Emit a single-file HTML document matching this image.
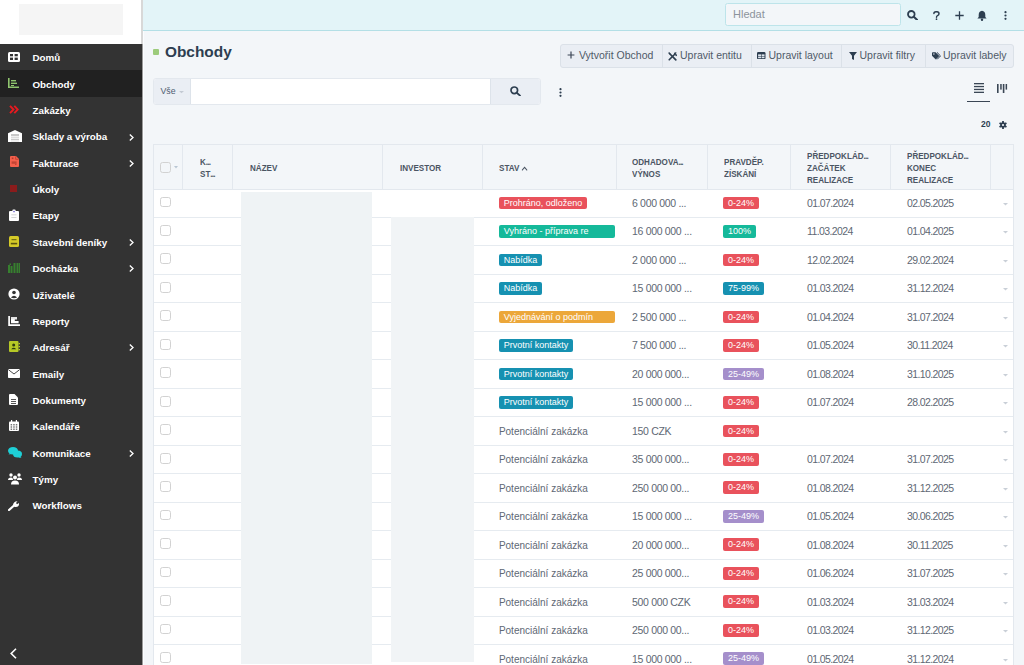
<!DOCTYPE html>
<html><head><meta charset="utf-8"><title>Obchody</title>
<style>
*{box-sizing:border-box;margin:0;padding:0}
html,body{width:1024px;height:665px;overflow:hidden}
body{position:relative;background:#f3f6f9;font-family:"Liberation Sans",sans-serif;color:#2d3e50}
.abs{position:absolute}
.side{position:absolute;left:0;top:0;width:142px;height:665px;background:#333333}
.logoarea{position:absolute;left:0;top:0;width:142px;height:44px;background:#fff}
.logo{position:absolute;left:19px;top:4px;width:104px;height:31px;background:#f5f5f5}
.sbord{position:absolute;left:142px;top:44px;width:1px;height:621px;background:#9a9a9a}.sbord2{position:absolute;left:141px;top:0;width:2px;height:44px;background:#d8d8d8}.wline{position:absolute;left:143px;top:31px;width:1px;height:634px;background:#fbfdff}
.nav{position:absolute;left:0;width:142px;height:26.35px}
.nav.act{background:#212121}
.nav .ic{position:absolute;line-height:0}
.nav .tx{position:absolute;left:32.5px;top:1.4px;height:26.35px;line-height:26.35px;font-size:9.8px;font-weight:bold;color:#fff;white-space:nowrap}
.nav .chev{position:absolute;left:129px}
.hdr{position:absolute;left:143px;top:0;width:881px;height:31px;background:#e3f4f8;border-bottom:1px solid #b3dfe6}
.search{position:absolute;left:725px;top:3px;width:176px;height:22.5px;background:#f3f6f9;border:1.4px solid #bde4ea;border-radius:2.5px}
.search span{position:absolute;left:7px;top:0;line-height:20.5px;font-size:11px;color:#8c939c}
.btngrp{position:absolute;left:559.5px;top:44px;width:454px;height:23.5px;background:#eaeef4;border:1px solid #dbe1e8;border-radius:3px}
.btn{position:absolute;top:0;height:21.5px;line-height:21.5px;font-size:10.5px;color:#4f5a68;white-space:nowrap}
.dv{position:absolute;top:0;width:1px;height:21.5px;background:#dbe1e8}
.tbl{position:absolute;left:152.5px;top:143.5px;width:861px;height:540px;background:#fff;border:1px solid #e3e8ee}
.th{position:absolute;left:0;top:0;width:859px;height:45px;background:#f3f6f9;border-bottom:1px solid #e3e8ee}
.thd{position:absolute;top:0;width:1px;height:44px;background:#e3e8ee}
.htx{position:absolute;font-size:8.7px;font-weight:bold;color:#4b5563;letter-spacing:0px;line-height:12.4px;white-space:nowrap;transform:scaleX(0.93);transform-origin:0 50%}.htx i{font-style:normal;letter-spacing:-0.9px}
.row{position:absolute;left:0;width:859px;height:28.47px;border-bottom:1px solid #e6ebf0}
.cb{position:absolute;left:6.8px;width:10.8px;height:10.8px;border:1.7px solid #d2d2d2;border-radius:2.6px}
.cell{position:absolute;top:0.5px;height:27.47px;line-height:27.47px;white-space:nowrap;color:#606874}
.badge{position:absolute;height:12.7px;line-height:12.7px;font-size:9px;color:#fff;border-radius:2px;padding:0 5px;white-space:nowrap;overflow:hidden}
.chv{position:absolute;left:849px;width:5px;height:3px;line-height:0}
.redact{position:absolute;background:#eff3f5}
</style></head><body>
<div class="side"></div><div class="logoarea"><div class="logo"></div></div><div class="sbord"></div><div class="sbord2"></div><div class="wline"></div><div class="nav" style="top:44.00px"><div class="ic" style="left:8px;top:8.00px"><svg width="12" height="10" viewBox="0 0 12 10"><rect x="0" y="0" width="12" height="10" rx="1.5" fill="#fff"/><rect x="2" y="2" width="3" height="2.3" fill="#333"/><rect x="6.6" y="2" width="3.2" height="2.3" fill="#333"/><rect x="2" y="5.6" width="3" height="2.4" fill="#333"/><rect x="6.6" y="5.6" width="3.2" height="2.4" fill="#333"/></svg></div><div class="tx">Domů</div></div><div class="nav act" style="top:70.35px"><div class="ic" style="left:8px;top:7.65px"><svg width="11" height="10" viewBox="0 0 11 10"><path d="M0.8 0 V9.2 H11" stroke="#8fc46e" stroke-width="1.6" fill="none"/><rect x="3" y="2" width="5" height="1.4" fill="#8fc46e"/><rect x="3" y="4.6" width="6" height="1.4" fill="#8fc46e"/><rect x="3" y="7" width="3" height="1" fill="#8fc46e"/></svg></div><div class="tx">Obchody</div></div><div class="nav" style="top:96.70px"><div class="ic" style="left:9px;top:8.30px"><svg width="10" height="9" viewBox="0 0 10 9"><path d="M1 0.8 L4.5 4.5 L1 8.2 M5.3 0.8 L8.8 4.5 L5.3 8.2" stroke="#e8191f" stroke-width="1.9" fill="none"/></svg></div><div class="tx">Zakázky</div></div><div class="nav" style="top:123.05px"><div class="ic" style="left:8px;top:6.95px"><svg width="14" height="12" viewBox="0 0 14 12"><path d="M0 3.2 L7 0 L14 3.2 V12 H0 Z" fill="#fff"/><rect x="3" y="4.2" width="8" height="7.8" fill="#f0f0f0"/><rect x="3" y="4.2" width="8" height="1.6" fill="#bdbdbd"/><rect x="3" y="7" width="8" height="0.6" fill="#cfcfcf"/><rect x="3" y="9" width="8" height="0.9" fill="#c4c4c4"/></svg></div><div class="tx">Sklady a výroba</div><div class="chev" style="top:3.65px;"><svg width="5" height="7" viewBox="0 0 5 7"><path d="M0.8 0.6 L4 3.5 L0.8 6.4" stroke="#fff" stroke-width="1.3" fill="none"/></svg></div></div><div class="nav" style="top:149.40px"><div class="ic" style="left:9.5px;top:7.10px"><svg width="9" height="11" viewBox="0 0 9 11"><path d="M0 1 Q0 0 1 0 H6 L9 3 V10 Q9 11 8 11 H1 Q0 11 0 10 Z" fill="#f4604c"/><path d="M5.6 0.3 V3.3 H8.7" stroke="#b83a2c" stroke-width="0.7" fill="none"/><rect x="1.8" y="1.5" width="1.6" height="1.6" fill="#b83a2c"/><rect x="1.6" y="5.4" width="5" height="2.4" fill="#c24434"/><rect x="5" y="7.8" width="1.5" height="1.2" fill="#c24434"/></svg></div><div class="tx">Fakturace</div><div class="chev" style="top:3.65px;"><svg width="5" height="7" viewBox="0 0 5 7"><path d="M0.8 0.6 L4 3.5 L0.8 6.4" stroke="#fff" stroke-width="1.3" fill="none"/></svg></div></div><div class="nav" style="top:175.75px"><div class="ic" style="left:9.5px;top:9.25px"><svg width="7" height="7" viewBox="0 0 7 7"><rect width="7" height="7" fill="#8a1c1c"/></svg></div><div class="tx">Úkoly</div></div><div class="nav" style="top:202.10px"><div class="ic" style="left:8.5px;top:6.70px"><svg width="10" height="12" viewBox="0 0 10 12"><rect x="0" y="2" width="10" height="10" rx="1" fill="#fff"/><path d="M3 2.5 L3.8 0.5 H6.2 L7 2.5 Z" fill="#fff"/><circle cx="5" cy="2.6" r="0.8" fill="#6a5acd"/><rect x="2.3" y="5.4" width="5.2" height="0.9" fill="#d0d0d0"/><rect x="2.3" y="8" width="5.2" height="0.9" fill="#d0d0d0"/></svg></div><div class="tx">Etapy</div></div><div class="nav" style="top:228.45px"><div class="ic" style="left:8.7px;top:7.55px"><svg width="10" height="11" viewBox="0 0 10 11"><rect width="10" height="11" rx="1.5" fill="#d5ca28"/><rect x="2.5" y="3.2" width="5" height="1" fill="#5a5410"/><rect x="1.8" y="6.8" width="6.4" height="1.6" fill="#5a5410"/></svg></div><div class="tx">Stavební deníky</div><div class="chev" style="top:3.65px;"><svg width="5" height="7" viewBox="0 0 5 7"><path d="M0.8 0.6 L4 3.5 L0.8 6.4" stroke="#fff" stroke-width="1.3" fill="none"/></svg></div></div><div class="nav" style="top:254.80px"><div class="ic" style="left:8px;top:8.20px"><svg width="12" height="10" viewBox="0 0 12 10"><rect x="0" y="2" width="2" height="8" fill="#37802f"/><rect x="2.5" y="3" width="2" height="7" fill="#37802f"/><rect x="5.5" y="0" width="2" height="10" fill="#37802f"/><rect x="8.5" y="0" width="1.5" height="10" fill="#37802f"/><rect x="10.5" y="0" width="1.5" height="10" fill="#37802f"/><rect x="1.5" y="0.5" width="1.5" height="1.5" fill="#37802f"/></svg></div><div class="tx">Docházka</div><div class="chev" style="top:3.65px;"><svg width="5" height="7" viewBox="0 0 5 7"><path d="M0.8 0.6 L4 3.5 L0.8 6.4" stroke="#fff" stroke-width="1.3" fill="none"/></svg></div></div><div class="nav" style="top:281.15px"><div class="ic" style="left:7.8px;top:7.05px"><svg width="12" height="12" viewBox="0 0 12 12"><circle cx="6" cy="6" r="5.6" fill="#fff"/><circle cx="6" cy="4.5" r="1.8" fill="#333"/><path d="M2.9 9.4 Q6 6.3 9.1 9.4 Q6 11 2.9 9.4 Z" fill="#333"/></svg></div><div class="tx">Uživatelé</div></div><div class="nav" style="top:307.50px"><div class="ic" style="left:7.8px;top:8.30px"><svg width="12" height="10" viewBox="0 0 12 10"><path d="M1.1 0 V9.1 H12" stroke="#fff" stroke-width="1.7" fill="none"/><path d="M3 1.2 H9 V3.3 H6.8 V5 H10.6 V7.3 H3 Z" fill="#fff"/><rect x="3" y="1.2" width="6" height="2.1" fill="#e6e6e6"/></svg></div><div class="tx">Reporty</div></div><div class="nav" style="top:333.85px"><div class="ic" style="left:8.7px;top:7.55px"><svg width="11" height="11" viewBox="0 0 11 11"><rect width="9.5" height="11" rx="1" fill="#b6c826"/><circle cx="4.7" cy="4" r="1.5" fill="#2d3a10"/><path d="M2.2 8.2 Q4.7 5.4 7.2 8.2 Z" fill="#2d3a10"/><rect x="9.6" y="2" width="1.4" height="1.3" fill="#b6c826"/><rect x="9.6" y="5" width="1.4" height="1.3" fill="#b6c826"/><rect x="9.6" y="8" width="1.4" height="1.3" fill="#b6c826"/></svg></div><div class="tx">Adresář</div><div class="chev" style="top:3.65px;"><svg width="5" height="7" viewBox="0 0 5 7"><path d="M0.8 0.6 L4 3.5 L0.8 6.4" stroke="#fff" stroke-width="1.3" fill="none"/></svg></div></div><div class="nav" style="top:360.20px"><div class="ic" style="left:7.8px;top:8.80px"><svg width="12" height="9" viewBox="0 0 12 9"><rect width="12" height="9" rx="0.8" fill="#fff"/><path d="M0.3 0.6 L6 5 L11.7 0.6" stroke="#333" stroke-width="0.9" fill="none"/></svg></div><div class="tx">Emaily</div></div><div class="nav" style="top:386.55px"><div class="ic" style="left:9px;top:7.95px"><svg width="9" height="11" viewBox="0 0 9 11"><path d="M0 1 Q0 0 1 0 H5.5 L9 3.5 V10 Q9 11 8 11 H1 Q0 11 0 10 Z" fill="#fff"/><rect x="2" y="5" width="5" height="0.9" fill="#444"/><rect x="2" y="7" width="5" height="0.9" fill="#444"/><rect x="2" y="9" width="5" height="0.9" fill="#444"/></svg></div><div class="tx">Dokumenty</div></div><div class="nav" style="top:412.90px"><div class="ic" style="left:8.7px;top:7.60px"><svg width="10" height="11" viewBox="0 0 10 11"><rect x="0" y="1.5" width="10" height="9.5" rx="1" fill="#fff"/><rect x="2" y="0" width="1.2" height="2.5" fill="#fff"/><rect x="6.8" y="0" width="1.2" height="2.5" fill="#fff"/><g fill="#555"><rect x="1.6" y="4.2" width="1.5" height="1.2"/><rect x="4.2" y="4.2" width="1.5" height="1.2"/><rect x="6.8" y="4.2" width="1.5" height="1.2"/><rect x="1.6" y="6.4" width="1.5" height="1.2"/><rect x="4.2" y="6.4" width="1.5" height="1.2"/><rect x="6.8" y="6.4" width="1.5" height="1.2"/><rect x="1.6" y="8.6" width="1.5" height="1.2"/><rect x="4.2" y="8.6" width="1.5" height="1.2"/><rect x="6.8" y="8.6" width="1.5" height="1.2"/></g></svg></div><div class="tx">Kalendáře</div></div><div class="nav" style="top:439.25px"><div class="ic" style="left:7.8px;top:7.95px"><svg width="14" height="11" viewBox="0 0 14 11"><ellipse cx="5" cy="3.8" rx="5" ry="3.8" fill="#1ecfd6"/><path d="M0.5 7.5 L2.5 5.5 L3.5 7 Z" fill="#1ecfd6"/><ellipse cx="9.5" cy="7" rx="4.5" ry="3.6" fill="#1ecfd6"/><path d="M13.5 11 L11.5 9 L10.5 10.4 Z" fill="#1ecfd6"/></svg></div><div class="tx">Komunikace</div><div class="chev" style="top:3.65px;"><svg width="5" height="7" viewBox="0 0 5 7"><path d="M0.8 0.6 L4 3.5 L0.8 6.4" stroke="#fff" stroke-width="1.3" fill="none"/></svg></div></div><div class="nav" style="top:465.60px"><div class="ic" style="left:7.8px;top:7.40px"><svg width="14" height="12" viewBox="0 0 14 12"><circle cx="3" cy="2" r="1.7" fill="#fff"/><circle cx="11" cy="2" r="1.7" fill="#fff"/><circle cx="7" cy="4.6" r="2" fill="#fff"/><path d="M0 7 Q0 4.5 3 4.5 Q5 4.5 5 6.5 V7 Z" fill="#fff"/><path d="M14 7 Q14 4.5 11 4.5 Q9 4.5 9 6.5 V7 Z" fill="#fff"/><path d="M3 11.5 Q3 7.5 7 7.5 Q11 7.5 11 11.5 Z" fill="#fff"/></svg></div><div class="tx">Týmy</div></div><div class="nav" style="top:491.95px"><div class="ic" style="left:7.8px;top:9.25px"><svg width="12" height="10" viewBox="0 0 12 10"><path d="M1 9 L6 4.5" stroke="#fff" stroke-width="2.2" stroke-linecap="round"/><path d="M5 4.5 Q5 0.5 9.5 0.3 L8 2 L9 3.2 L11 2 Q11.5 6.5 6.8 6 Z" fill="#fff"/></svg></div><div class="tx">Workflows</div></div><div class="abs" style="left:9.5px;top:647.5px;line-height:0"><svg width="7" height="11" viewBox="0 0 7 11"><path d="M6 0.8 L1.2 5.5 L6 10.2" stroke="#fff" stroke-width="1.6" fill="none"/></svg></div><div class="hdr"></div><div class="search"><span>Hledat</span></div><div class="abs" style="left:907px;top:10px;line-height:0"><svg width="12" height="10" viewBox="0 0 12 10"><circle cx="4.3" cy="4.3" r="3.3" stroke="#2d3e50" stroke-width="1.8" fill="none"/><path d="M6.8 6.8 L10 9.8" stroke="#2d3e50" stroke-width="2" stroke-linecap="round"/></svg></div><div class="abs" style="left:933px;top:11px;line-height:0"><svg width="7" height="9" viewBox="0 0 7 9"><path d="M0.9 2.6 Q0.9 0.7 3.4 0.7 Q6 0.7 6 2.7 Q6 4 4.5 4.7 Q3.5 5.2 3.5 6.2" stroke="#2d3e50" stroke-width="1.45" fill="none" stroke-linecap="round"/><circle cx="3.5" cy="8.2" r="0.85" fill="#2d3e50"/></svg></div><div class="abs" style="left:954.5px;top:10.8px;line-height:0"><svg width="9" height="9" viewBox="0 0 9 9"><path d="M4.5 0.3 V8.7 M0.3 4.5 H8.7" stroke="#2d3e50" stroke-width="1.3"/></svg></div><div class="abs" style="left:977px;top:9.5px;line-height:0"><svg width="10" height="11" viewBox="0 0 10 11"><path d="M5 0.8 Q8.3 1.2 8.3 5 V7 L9.6 8.6 H0.4 L1.7 7 V5 Q1.7 1.2 5 0.8 Z" fill="#2d3e50"/><circle cx="5" cy="9.7" r="1.2" fill="#2d3e50"/></svg></div><div class="abs" style="left:1004px;top:11px;line-height:0"><svg width="3" height="9" viewBox="0 0 3 9"><circle cx="1.5" cy="1.2" r="1.1" fill="#2d3e50"/><circle cx="1.5" cy="4.5" r="1.1" fill="#2d3e50"/><circle cx="1.5" cy="7.8" r="1.1" fill="#2d3e50"/></svg></div><div class="abs" style="left:152.5px;top:48.7px;width:6.3px;height:6.3px;background:#9ccb7b;border-radius:1px"></div><div class="abs" style="left:165px;top:42px;font-size:15.4px;font-weight:bold;color:#2d3e50;line-height:20px">Obchody</div><div class="btngrp"><div class="abs" style="left:6px;top:6px;line-height:0"><svg width="8" height="8" viewBox="0 0 8 8"><path d="M4 0.6 V7.4 M0.6 4 H7.4" stroke="#3d4756" stroke-width="1.2"/></svg></div><div class="btn" style="left:18.5px">Vytvořit Obchod</div><div class="dv" style="left:101.5px"></div><div class="abs" style="left:107.5px;top:6.6px;line-height:0"><svg width="9" height="9" viewBox="0 0 9 9"><path d="M1.2 7.8 L7 2" stroke="#2d3e50" stroke-width="1.6" stroke-linecap="round"/><path d="M5.8 1.2 Q7.2 -0.3 8.8 0.8 L7.5 2 L8.2 2.8 L9 1.8 Q9.6 3.6 8 4.2 Z" fill="#2d3e50"/><path d="M1.5 1.5 L7.8 7.8" stroke="#2d3e50" stroke-width="1.7" stroke-linecap="round"/><path d="M0.2 0.8 L1.2 0.2 L2.6 1.6 L1.6 2.6 Z" fill="#2d3e50"/></svg></div><div class="btn" style="left:119.5px">Upravit entitu</div><div class="dv" style="left:190px"></div><div class="abs" style="left:196.5px;top:7.3px;line-height:0"><svg width="8.5" height="7.2" viewBox="0 0 8.5 7.2"><rect width="8.5" height="7.2" rx="1.3" fill="#2d3e50"/><g fill="#dfe6ee"><rect x="1.1" y="2.4" width="2.9" height="1.7"/><rect x="4.6" y="2.4" width="2.9" height="1.7"/><rect x="1.1" y="4.6" width="2.9" height="1.6"/><rect x="4.6" y="4.6" width="2.9" height="1.6"/></g></svg></div><div class="btn" style="left:208px">Upravit layout</div><div class="dv" style="left:280.5px"></div><div class="abs" style="left:288px;top:7px;line-height:0"><svg width="8" height="8" viewBox="0 0 8 8"><path d="M0 0 H8 L5 3.8 V8 L3 7 V3.8 Z" fill="#2d3e50"/></svg></div><div class="btn" style="left:299px">Upravit filtry</div><div class="dv" style="left:364px"></div><div class="abs" style="left:371px;top:7px;line-height:0"><svg width="9" height="8" viewBox="0 0 9 8"><path d="M0 0.9 Q0 0.2 0.8 0.2 H3.6 L7.3 3.9 L3.8 7.5 L0 3.7 Z" fill="#2d3e50"/><path d="M4.9 0.3 L8.5 3.9 L5.2 7.3" stroke="#2d3e50" stroke-width="1" fill="none"/><circle cx="1.9" cy="2" r="0.75" fill="#e4e9f0"/></svg></div><div class="btn" style="left:382.5px">Upravit labely</div></div><div class="abs" style="left:152.5px;top:78px;width:388.5px;height:27px;background:#fff;border:1px solid #e3e8ee;border-radius:3px;overflow:hidden"><div class="abs" style="left:0;top:0;width:37.5px;height:25px;background:#eaeef4;border-right:1px solid #dde3ea"></div><div class="abs" style="left:7px;top:0;line-height:25px;font-size:8.8px;color:#4f5d70">Vše</div><div class="abs" style="left:25px;top:10px;line-height:0"><svg width="5" height="3" viewBox="0 0 5 3"><path d="M0 0 H5 L2.5 2.2 Z" fill="#c3cad3"/></svg></div><div class="abs" style="left:336.5px;top:0;width:51px;height:25px;background:#eaeef4;border-left:1px solid #dde3ea"></div></div><div class="abs" style="left:509.5px;top:86.2px;line-height:0"><svg width="12" height="10" viewBox="0 0 12 10"><circle cx="4.3" cy="4.3" r="3.3" stroke="#2d3e50" stroke-width="1.7" fill="none"/><path d="M6.8 6.8 L10 9.6" stroke="#2d3e50" stroke-width="1.8" stroke-linecap="round"/></svg></div><div class="abs" style="left:558.5px;top:87.5px;line-height:0"><svg width="3" height="9" viewBox="0 0 3 9"><circle cx="1.5" cy="1.2" r="1.1" fill="#2d3e50"/><circle cx="1.5" cy="4.5" r="1.1" fill="#2d3e50"/><circle cx="1.5" cy="7.8" r="1.1" fill="#2d3e50"/></svg></div><div class="abs" style="left:973.5px;top:83px;line-height:0"><svg width="10" height="10" viewBox="0 0 10 10"><g fill="#3a4655"><rect y="0" width="10" height="1.3"/><rect y="2.9" width="10" height="1.3"/><rect y="5.8" width="10" height="1.3"/><rect y="8.7" width="10" height="1.3"/></g></svg></div><div class="abs" style="left:966.5px;top:100.5px;width:23.5px;height:1.5px;background:#3a4655"></div><div class="abs" style="left:996.5px;top:84px;line-height:0"><svg width="11" height="9" viewBox="0 0 11 9"><g fill="#3a4655"><rect x="0" y="0" width="1.6" height="9"/><rect x="3.2" y="0" width="1.5" height="5.6"/><rect x="5.8" y="0" width="1.6" height="9"/><rect x="8.6" y="0" width="1.5" height="5.6"/></g></svg></div><div class="abs" style="left:981px;top:118px;font-size:8.5px;font-weight:bold;color:#2d3e50;line-height:12px">20</div><div class="abs" style="left:998.5px;top:121px;line-height:0"><svg width="8" height="8" viewBox="0 0 8 8"><g fill="#2d3e50"><circle cx="4" cy="4" r="2.8"/><rect x="3.1" y="0" width="1.8" height="8"/><rect x="3.1" y="0" width="1.8" height="8" transform="rotate(60 4 4)"/><rect x="3.1" y="0" width="1.8" height="8" transform="rotate(120 4 4)"/></g><circle cx="4" cy="4" r="1.1" fill="#f3f6f9"/></svg></div><div class="tbl"><div class="th"><div class="thd" style="left:28.8px"></div><div class="thd" style="left:78.9px"></div><div class="thd" style="left:228.8px"></div><div class="thd" style="left:328.5px"></div><div class="thd" style="left:462.3px"></div><div class="thd" style="left:553.0px"></div><div class="thd" style="left:636.7px"></div><div class="thd" style="left:736.5px"></div><div class="thd" style="left:836.5px"></div><div class="cb" style="top:17.3px"></div><div class="abs" style="left:20.5px;top:19.8px;line-height:0"><svg width="4" height="3" viewBox="0 0 4 3"><path d="M0 0 H4 L2 2.4 Z" fill="#b9c6d3"/></svg></div><div class="htx" style="left:46.2px;top:11.3px">K<i>...</i><br>ST<i>...</i></div><div class="htx" style="left:96.3px;top:17.5px">NÁZEV</div><div class="htx" style="left:246.0px;top:17.5px">INVESTOR</div><div class="htx" style="left:345.5px;top:17.6px">STAV <svg width="7" height="5" viewBox="0 0 7 5" style="vertical-align:0.5px"><path d="M0.7 4.3 L3.5 1.3 L6.3 4.3" stroke="#4b5563" stroke-width="1.05" fill="none"/></svg></div><div class="htx" style="left:478.8px;top:11.3px">ODHADOVA<i>...</i><br>VÝNOS</div><div class="htx" style="left:570.2px;top:11.3px">PRAVDĚP.<br>ZÍSKÁNÍ</div><div class="htx" style="left:653.5px;top:5.1px">PŘEDPOKLÁD<i>...</i><br>ZAČÁTEK<br>REALIZACE</div><div class="htx" style="left:753.5px;top:5.1px">PŘEDPOKLÁD<i>...</i><br>KONEC<br>REALIZACE</div></div><div class="row" style="top:45.00px"><div class="cb" style="top:7px"></div><div class="badge" style="left:345.3px;top:7.3px;background:#e9525c;max-width:116px;">Prohráno, odloženo</div><div class="cell" style="left:478.5px;font-size:10.5px;letter-spacing:-0.32px">6 000 000 ...</div><div class="badge" style="left:569.5px;top:7.3px;background:#e9525c">0-24%</div><div class="cell" style="left:653.5px;font-size:10.5px;letter-spacing:-0.6px">01.07.2024</div><div class="cell" style="left:753.5px;font-size:10.5px;letter-spacing:-0.6px">02.05.2025</div><div class="chv" style="top:11.5px"><svg width="5" height="3" viewBox="0 0 5 3"><path d="M0 0 H5 L2.5 2.5 Z" fill="#c9cfd7"/></svg></div></div><div class="row" style="top:73.47px"><div class="cb" style="top:7px"></div><div class="badge" style="left:345.3px;top:7.3px;background:#15b99a;max-width:116px;width:116px">Vyhráno - příprava re</div><div class="cell" style="left:478.5px;font-size:10.5px;letter-spacing:-0.32px">16 000 000 ...</div><div class="badge" style="left:569.5px;top:7.3px;background:#15b99a">100%</div><div class="cell" style="left:653.5px;font-size:10.5px;letter-spacing:-0.6px">11.03.2024</div><div class="cell" style="left:753.5px;font-size:10.5px;letter-spacing:-0.6px">01.04.2025</div><div class="chv" style="top:11.5px"><svg width="5" height="3" viewBox="0 0 5 3"><path d="M0 0 H5 L2.5 2.5 Z" fill="#c9cfd7"/></svg></div></div><div class="row" style="top:101.94px"><div class="cb" style="top:7px"></div><div class="badge" style="left:345.3px;top:7.3px;background:#1691b1;max-width:116px;">Nabídka</div><div class="cell" style="left:478.5px;font-size:10.5px;letter-spacing:-0.32px">2 000 000 ...</div><div class="badge" style="left:569.5px;top:7.3px;background:#e9525c">0-24%</div><div class="cell" style="left:653.5px;font-size:10.5px;letter-spacing:-0.6px">12.02.2024</div><div class="cell" style="left:753.5px;font-size:10.5px;letter-spacing:-0.6px">29.02.2024</div><div class="chv" style="top:11.5px"><svg width="5" height="3" viewBox="0 0 5 3"><path d="M0 0 H5 L2.5 2.5 Z" fill="#c9cfd7"/></svg></div></div><div class="row" style="top:130.41px"><div class="cb" style="top:7px"></div><div class="badge" style="left:345.3px;top:7.3px;background:#1691b1;max-width:116px;">Nabídka</div><div class="cell" style="left:478.5px;font-size:10.5px;letter-spacing:-0.32px">15 000 000 ...</div><div class="badge" style="left:569.5px;top:7.3px;background:#1691b1">75-99%</div><div class="cell" style="left:653.5px;font-size:10.5px;letter-spacing:-0.6px">01.03.2024</div><div class="cell" style="left:753.5px;font-size:10.5px;letter-spacing:-0.6px">31.12.2024</div><div class="chv" style="top:11.5px"><svg width="5" height="3" viewBox="0 0 5 3"><path d="M0 0 H5 L2.5 2.5 Z" fill="#c9cfd7"/></svg></div></div><div class="row" style="top:158.88px"><div class="cb" style="top:7px"></div><div class="badge" style="left:345.3px;top:7.3px;background:#eca73a;max-width:116px;width:116px">Vyjednávání o podmín</div><div class="cell" style="left:478.5px;font-size:10.5px;letter-spacing:-0.32px">2 500 000 ...</div><div class="badge" style="left:569.5px;top:7.3px;background:#e9525c">0-24%</div><div class="cell" style="left:653.5px;font-size:10.5px;letter-spacing:-0.6px">01.04.2024</div><div class="cell" style="left:753.5px;font-size:10.5px;letter-spacing:-0.6px">31.07.2024</div><div class="chv" style="top:11.5px"><svg width="5" height="3" viewBox="0 0 5 3"><path d="M0 0 H5 L2.5 2.5 Z" fill="#c9cfd7"/></svg></div></div><div class="row" style="top:187.35px"><div class="cb" style="top:7px"></div><div class="badge" style="left:345.3px;top:7.3px;background:#1691b1;max-width:116px;">Prvotní kontakty</div><div class="cell" style="left:478.5px;font-size:10.5px;letter-spacing:-0.32px">7 500 000 ...</div><div class="badge" style="left:569.5px;top:7.3px;background:#e9525c">0-24%</div><div class="cell" style="left:653.5px;font-size:10.5px;letter-spacing:-0.6px">01.05.2024</div><div class="cell" style="left:753.5px;font-size:10.5px;letter-spacing:-0.6px">30.11.2024</div><div class="chv" style="top:11.5px"><svg width="5" height="3" viewBox="0 0 5 3"><path d="M0 0 H5 L2.5 2.5 Z" fill="#c9cfd7"/></svg></div></div><div class="row" style="top:215.82px"><div class="cb" style="top:7px"></div><div class="badge" style="left:345.3px;top:7.3px;background:#1691b1;max-width:116px;">Prvotní kontakty</div><div class="cell" style="left:478.5px;font-size:10.5px;letter-spacing:-0.32px">20 000 000...</div><div class="badge" style="left:569.5px;top:7.3px;background:#a58fcb">25-49%</div><div class="cell" style="left:653.5px;font-size:10.5px;letter-spacing:-0.6px">01.08.2024</div><div class="cell" style="left:753.5px;font-size:10.5px;letter-spacing:-0.6px">31.10.2025</div><div class="chv" style="top:11.5px"><svg width="5" height="3" viewBox="0 0 5 3"><path d="M0 0 H5 L2.5 2.5 Z" fill="#c9cfd7"/></svg></div></div><div class="row" style="top:244.29px"><div class="cb" style="top:7px"></div><div class="badge" style="left:345.3px;top:7.3px;background:#1691b1;max-width:116px;">Prvotní kontakty</div><div class="cell" style="left:478.5px;font-size:10.5px;letter-spacing:-0.32px">15 000 000 ...</div><div class="badge" style="left:569.5px;top:7.3px;background:#e9525c">0-24%</div><div class="cell" style="left:653.5px;font-size:10.5px;letter-spacing:-0.6px">01.07.2024</div><div class="cell" style="left:753.5px;font-size:10.5px;letter-spacing:-0.6px">28.02.2025</div><div class="chv" style="top:11.5px"><svg width="5" height="3" viewBox="0 0 5 3"><path d="M0 0 H5 L2.5 2.5 Z" fill="#c9cfd7"/></svg></div></div><div class="row" style="top:272.76px"><div class="cb" style="top:7px"></div><div class="cell" style="left:345.4px;font-size:10px">Potenciální zakázka</div><div class="cell" style="left:478.5px;font-size:10.5px;letter-spacing:-0.32px">150 CZK</div><div class="badge" style="left:569.5px;top:7.3px;background:#e9525c">0-24%</div><div class="chv" style="top:11.5px"><svg width="5" height="3" viewBox="0 0 5 3"><path d="M0 0 H5 L2.5 2.5 Z" fill="#c9cfd7"/></svg></div></div><div class="row" style="top:301.23px"><div class="cb" style="top:7px"></div><div class="cell" style="left:345.4px;font-size:10px">Potenciální zakázka</div><div class="cell" style="left:478.5px;font-size:10.5px;letter-spacing:-0.32px">35 000 000...</div><div class="badge" style="left:569.5px;top:7.3px;background:#e9525c">0-24%</div><div class="cell" style="left:653.5px;font-size:10.5px;letter-spacing:-0.6px">01.07.2024</div><div class="cell" style="left:753.5px;font-size:10.5px;letter-spacing:-0.6px">31.07.2025</div><div class="chv" style="top:11.5px"><svg width="5" height="3" viewBox="0 0 5 3"><path d="M0 0 H5 L2.5 2.5 Z" fill="#c9cfd7"/></svg></div></div><div class="row" style="top:329.70px"><div class="cb" style="top:7px"></div><div class="cell" style="left:345.4px;font-size:10px">Potenciální zakázka</div><div class="cell" style="left:478.5px;font-size:10.5px;letter-spacing:-0.32px">250 000 00...</div><div class="badge" style="left:569.5px;top:7.3px;background:#e9525c">0-24%</div><div class="cell" style="left:653.5px;font-size:10.5px;letter-spacing:-0.6px">01.08.2024</div><div class="cell" style="left:753.5px;font-size:10.5px;letter-spacing:-0.6px">31.12.2025</div><div class="chv" style="top:11.5px"><svg width="5" height="3" viewBox="0 0 5 3"><path d="M0 0 H5 L2.5 2.5 Z" fill="#c9cfd7"/></svg></div></div><div class="row" style="top:358.17px"><div class="cb" style="top:7px"></div><div class="cell" style="left:345.4px;font-size:10px">Potenciální zakázka</div><div class="cell" style="left:478.5px;font-size:10.5px;letter-spacing:-0.32px">15 000 000 ...</div><div class="badge" style="left:569.5px;top:7.3px;background:#a58fcb">25-49%</div><div class="cell" style="left:653.5px;font-size:10.5px;letter-spacing:-0.6px">01.05.2024</div><div class="cell" style="left:753.5px;font-size:10.5px;letter-spacing:-0.6px">30.06.2025</div><div class="chv" style="top:11.5px"><svg width="5" height="3" viewBox="0 0 5 3"><path d="M0 0 H5 L2.5 2.5 Z" fill="#c9cfd7"/></svg></div></div><div class="row" style="top:386.64px"><div class="cb" style="top:7px"></div><div class="cell" style="left:345.4px;font-size:10px">Potenciální zakázka</div><div class="cell" style="left:478.5px;font-size:10.5px;letter-spacing:-0.32px">20 000 000...</div><div class="badge" style="left:569.5px;top:7.3px;background:#e9525c">0-24%</div><div class="cell" style="left:653.5px;font-size:10.5px;letter-spacing:-0.6px">01.08.2024</div><div class="cell" style="left:753.5px;font-size:10.5px;letter-spacing:-0.6px">30.11.2025</div><div class="chv" style="top:11.5px"><svg width="5" height="3" viewBox="0 0 5 3"><path d="M0 0 H5 L2.5 2.5 Z" fill="#c9cfd7"/></svg></div></div><div class="row" style="top:415.11px"><div class="cb" style="top:7px"></div><div class="cell" style="left:345.4px;font-size:10px">Potenciální zakázka</div><div class="cell" style="left:478.5px;font-size:10.5px;letter-spacing:-0.32px">25 000 000...</div><div class="badge" style="left:569.5px;top:7.3px;background:#e9525c">0-24%</div><div class="cell" style="left:653.5px;font-size:10.5px;letter-spacing:-0.6px">01.06.2024</div><div class="cell" style="left:753.5px;font-size:10.5px;letter-spacing:-0.6px">31.07.2025</div><div class="chv" style="top:11.5px"><svg width="5" height="3" viewBox="0 0 5 3"><path d="M0 0 H5 L2.5 2.5 Z" fill="#c9cfd7"/></svg></div></div><div class="row" style="top:443.58px"><div class="cb" style="top:7px"></div><div class="cell" style="left:345.4px;font-size:10px">Potenciální zakázka</div><div class="cell" style="left:478.5px;font-size:10.5px;letter-spacing:-0.32px">500 000 CZK</div><div class="badge" style="left:569.5px;top:7.3px;background:#e9525c">0-24%</div><div class="cell" style="left:653.5px;font-size:10.5px;letter-spacing:-0.6px">01.03.2024</div><div class="cell" style="left:753.5px;font-size:10.5px;letter-spacing:-0.6px">31.03.2024</div><div class="chv" style="top:11.5px"><svg width="5" height="3" viewBox="0 0 5 3"><path d="M0 0 H5 L2.5 2.5 Z" fill="#c9cfd7"/></svg></div></div><div class="row" style="top:472.05px"><div class="cb" style="top:7px"></div><div class="cell" style="left:345.4px;font-size:10px">Potenciální zakázka</div><div class="cell" style="left:478.5px;font-size:10.5px;letter-spacing:-0.32px">250 000 00...</div><div class="badge" style="left:569.5px;top:7.3px;background:#e9525c">0-24%</div><div class="cell" style="left:653.5px;font-size:10.5px;letter-spacing:-0.6px">01.03.2024</div><div class="cell" style="left:753.5px;font-size:10.5px;letter-spacing:-0.6px">31.12.2025</div><div class="chv" style="top:11.5px"><svg width="5" height="3" viewBox="0 0 5 3"><path d="M0 0 H5 L2.5 2.5 Z" fill="#c9cfd7"/></svg></div></div><div class="row" style="top:500.52px"><div class="cb" style="top:7px"></div><div class="cell" style="left:345.4px;font-size:10px">Potenciální zakázka</div><div class="cell" style="left:478.5px;font-size:10.5px;letter-spacing:-0.32px">15 000 000 ...</div><div class="badge" style="left:569.5px;top:7.3px;background:#a58fcb">25-49%</div><div class="cell" style="left:653.5px;font-size:10.5px;letter-spacing:-0.6px">01.05.2024</div><div class="cell" style="left:753.5px;font-size:10.5px;letter-spacing:-0.6px">31.12.2024</div><div class="chv" style="top:11.5px"><svg width="5" height="3" viewBox="0 0 5 3"><path d="M0 0 H5 L2.5 2.5 Z" fill="#c9cfd7"/></svg></div></div></div><div class="redact" style="left:241.4px;top:191.5px;width:130.2px;height:472px"></div><div class="redact" style="left:390.7px;top:217.4px;width:83.5px;height:444.8px;background:#f1f4f6"></div></body></html>
